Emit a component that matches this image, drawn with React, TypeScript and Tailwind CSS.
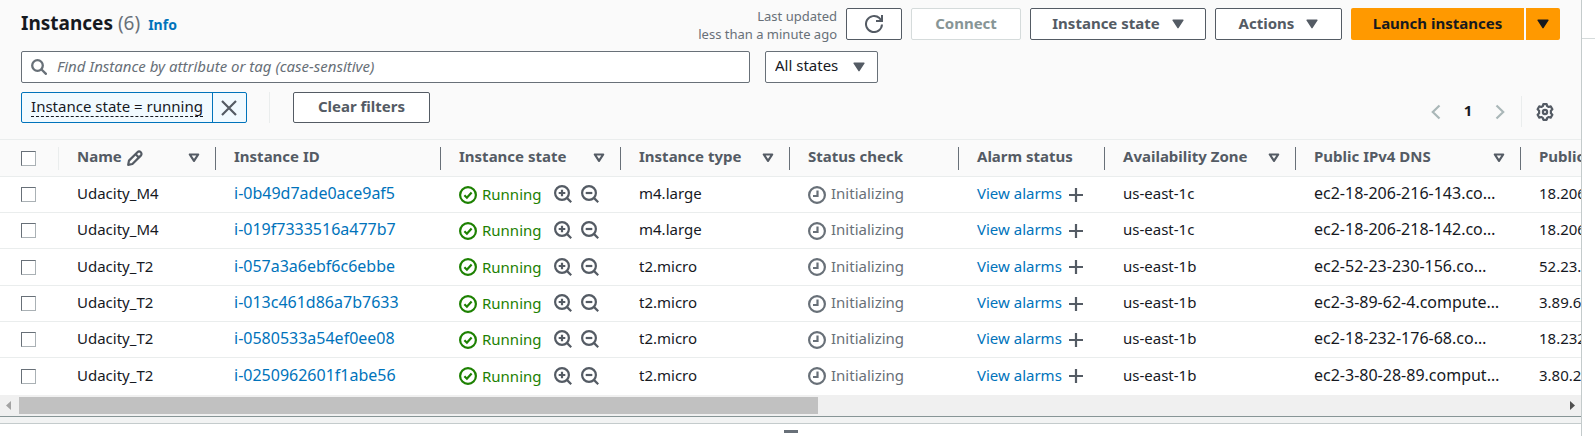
import React from "react";

const F = "font-['Noto_Sans','Open_Sans',sans-serif]";

type IconProps = { className?: string };

const Refresh = () => (
  <svg viewBox="0 0 18 18" className="size-[18px]" fill="none" stroke="currentColor" strokeWidth="2">
    <path d="M17 9.500a8 8 0 1 1-2.600-6.400L17 6" />
    <path d="M11 6h6V0" />
  </svg>
);

const SearchIcon = () => (
  <svg viewBox="0 0 16 16" className="size-4 shrink-0" fill="none" stroke="currentColor" strokeWidth="2.300">
    <circle cx="6.500" cy="6.500" r="5.300" />
    <path d="M10.300 10.300 15.600 15.600" />
  </svg>
);

const CaretDown = ({ className = "" }: IconProps) => (
  <svg viewBox="0 0 12 10" className={`h-[10px] w-3 shrink-0 ${className}`} fill="currentColor">
    <path d="M1 .5h10a.6.6 0 0 1 .5.9L6.600 9a.7.7 0 0 1-1.200 0L.5 1.400A.6.6 0 0 1 1 .5Z" />
  </svg>
);

const SortCaret = () => (
  <svg viewBox="0 0 12 10" className="h-[10px] w-3 shrink-0" fill="none" stroke="currentColor" strokeWidth="2.200" strokeLinejoin="round">
    <path d="M1.800 1.500h8.400L6 7.900Z" />
  </svg>
);

const Pencil = () => (
  <svg viewBox="0 0 16 16" className="size-4 shrink-0" fill="none" stroke="currentColor" strokeWidth="2.200" strokeLinejoin="round">
    <path d="M1.200 14.800 2 10.600 10.400 2.200a2.200 2.200 0 0 1 3.400 3.400L5.400 14Z" />
    <path d="M8.600 4.200 11.800 7.400" />
  </svg>
);

const CheckCircle = () => (
  <svg viewBox="0 0 18 18" className="size-[18px] shrink-0" fill="none" stroke="currentColor" strokeWidth="2.200">
    <circle cx="9" cy="9" r="7.900" />
    <path d="m5.400 9.300 2.500 2.400 4.700-5.200" />
  </svg>
);

const ClockIcon = () => (
  <svg viewBox="0 0 18 18" className="size-[18px] shrink-0" fill="none" stroke="currentColor" strokeWidth="2.200">
    <circle cx="9" cy="9" r="7.900" />
    <path d="M9.500 4.500v5.500H5" />
  </svg>
);

const Magnify = ({ plus }: { plus?: boolean }) => (
  <svg viewBox="0 0 18 18" className="size-[18px]" fill="none" stroke="currentColor" strokeWidth="2.200">
    <circle cx="8" cy="8" r="6.900" />
    <path d="M12.900 12.900 17.200 17.200" />
    <path d={plus ? "M4.700 8h6.600M8 4.700v6.600" : "M4.700 8h6.600"} />
  </svg>
);

const Plus = () => (
  <svg viewBox="0 0 14 14" className="size-[14px]" fill="none" stroke="currentColor" strokeWidth="2.200">
    <path d="M7 0v14M0 7h14" />
  </svg>
);

const Close = () => (
  <svg viewBox="0 0 16 16" className="size-4" fill="none" stroke="currentColor" strokeWidth="2.200">
    <path d="m1 1 14 14M15 1 1 15" />
  </svg>
);

const Chevron = ({ right }: { right?: boolean }) => (
  <svg viewBox="0 0 10 16" className="h-4 w-[10px]" fill="none" stroke="currentColor" strokeWidth="2.200">
    <path d={right ? "m1.500 1.500 6.700 6.500-6.700 6.500" : "m8.500 1.500-6.700 6.500 6.700 6.500"} />
  </svg>
);

const Gear = () => (
  <svg viewBox="0 0 18 18" className="size-[18px]" fill="none" stroke="currentColor" strokeWidth="2.200" strokeLinejoin="round">
    <path d="M7.300 1.200h3.400l.5 1.900 1.500.9 2-.6 1.700 2.800-1.500 1.500v2.600l1.500 1.500-1.700 2.800-2-.6-1.500.9-.5 1.900H7.300l-.5-1.900-1.500-.9-2 .6-1.700-2.800L3.100 10.300V7.700L1.600 6.200l1.700-2.800 2 .6 1.500-.9Z" />
    <circle cx="9" cy="9" r="2.100" />
  </svg>
);

const button =
  "flex items-center justify-center rounded-[2px] border border-[#545b64] bg-white text-[15px] leading-5 font-bold text-[#545b64]";

const columns = [
  { label: "Name", edit: true, sort: true },
  { label: "Instance ID" },
  { label: "Instance state", sort: true },
  { label: "Instance type", sort: true },
  { label: "Status check" },
  { label: "Alarm status" },
  { label: "Availability Zone", sort: true },
  { label: "Public IPv4 DNS", sort: true },
  { label: "Public IPv4 address", sort: true },
];

const rows = [
  ["Udacity_M4", "i-0b49d7ade0ace9af5", "m4.large", "us-east-1c", "ec2-18-206-216-143.co…", "18.206.216.143"],
  ["Udacity_M4", "i-019f7333516a477b7", "m4.large", "us-east-1c", "ec2-18-206-218-142.co…", "18.206.218.142"],
  ["Udacity_T2", "i-057a3a6ebf6c6ebbe", "t2.micro", "us-east-1b", "ec2-52-23-230-156.co…", "52.23.230.156"],
  ["Udacity_T2", "i-013c461d86a7b7633", "t2.micro", "us-east-1b", "ec2-3-89-62-4.compute…", "3.89.62.4"],
  ["Udacity_T2", "i-0580533a54ef0ee08", "t2.micro", "us-east-1b", "ec2-18-232-176-68.co…", "18.232.176.68"],
  ["Udacity_T2", "i-0250962601f1abe56", "t2.micro", "us-east-1b", "ec2-3-80-28-89.comput…", "3.80.28.89"],
];

const Checkbox = ({ label }: { label: string }) => (
  <input
    type="checkbox"
    aria-label={label}
    className="block size-[15px] appearance-none border border-[#687078] border-r-[#aab1b5] border-b-[#aab1b5] bg-white"
  />
);

export default function App() {
  return (
    <div className={`${F} flex min-h-screen bg-white text-[15px] leading-5 text-[#16191f]`}>
      <main className="flex min-w-0 flex-1 flex-col">
        <section className="bg-[#fafafa]">
          <header className="flex h-[51px] items-start px-[21px] pt-2">
            <div className="flex flex-1 items-baseline">
              <h1 className="text-[19px] leading-[30px] font-bold">
                Instances <span className="font-normal text-[#687078]">(6)</span>
              </h1>
              <a href="#info" className="ml-2 text-[14px] font-bold text-[#0073bb]">Info</a>
            </div>
            <div className="flex items-start gap-[9px]">
              <p className="-mt-px text-right text-[13px] leading-[18px] text-[#687078]">
                Last updated
                <br />
                less than a minute ago
              </p>
              <button className={`${button} h-8 w-14`} aria-label="Refresh"><Refresh /></button>
              <button disabled className="flex h-8 w-[110px] items-center justify-center rounded-[2px] border border-[#d5dbdb] bg-white pb-[2px] text-[15px] leading-5 font-bold text-[#879596]">Connect</button>
              <button className={`${button} h-8 w-44 gap-3`}><span className="pb-[2px]">Instance state</span><CaretDown /></button>
              <button className={`${button} h-8 w-[127px] gap-3`}><span className="pb-[2px]">Actions</span><CaretDown /></button>
              <div className="flex gap-[2px]">
                <button className="h-8 w-[173px] rounded-l-[2px] bg-[#ff9900] pb-[2px] text-[15px] leading-5 font-bold text-[#16191f]">Launch instances</button>
                <button aria-label="More launch options" className="flex h-8 w-[34px] items-center justify-center rounded-r-[2px] bg-[#ff9900]"><CaretDown /></button>
              </div>
            </div>
          </header>

          <div className="flex gap-[15px] px-[21px]">
            <label className="flex h-8 w-[729px] items-center gap-[10px] rounded-[2px] border border-[#687078] bg-white px-[9px] text-[#687078]">
              <SearchIcon />
              <input
                type="search"
                aria-label="Find instances"
                placeholder="Find Instance by attribute or tag (case-sensitive)"
                className="min-w-0 flex-1 bg-transparent pb-[2px] outline-none placeholder:text-[#687078] placeholder:italic"
              />
            </label>
            <div className="relative flex items-center">
              <select aria-label="State filter" className="h-8 w-[113px] appearance-none rounded-[2px] border border-[#687078] bg-white pb-[4px] pl-[9px]">
                <option>All states</option>
              </select>
              <CaretDown className="pointer-events-none absolute right-[13px] text-[#545b64]" />
            </div>
          </div>

          <div className="flex items-start px-[21px] pt-[9px] pb-3">
            <div className="flex h-[31px] rounded-[2px] border border-[#0073bb] bg-[#f1faff]">
              <button className="flex w-[191px] items-center justify-center border-r border-[#0073bb] pb-[2px]">
                <span className="border-b border-dashed border-[#16191f]">Instance state = running</span>
              </button>
              <button aria-label="Remove filter" className="flex w-[33px] items-center justify-center pr-px text-[#545b64]"><Close /></button>
            </div>
            <span className="mx-[22px] h-[31px] border-l border-[#eaeded]" />
            <button className={`${button} ml-px h-[31px] w-[137px] pb-[3px]`}>Clear filters</button>
            <nav aria-label="Pages" className="ml-auto flex h-[35px] items-end">
              <span className="flex h-[31px] items-center">
                <button disabled aria-label="Previous page" className="text-[#aab7b8]"><Chevron /></button>
                <button className="w-[54px] pb-[3px] font-bold">1</button>
                <button disabled aria-label="Next page" className="text-[#aab7b8]"><Chevron right /></button>
              </span>
              <span className="mr-[14px] ml-4 h-[31px] border-l border-[#eaeded]" />
              <button aria-label="Preferences" className="mr-[6px] h-[31px] text-[#545b64]"><Gear /></button>
            </nav>
          </div>
        </section>

        <div className="overflow-hidden bg-white">
          <table className="w-[1761px] table-fixed border-collapse text-left">
            <colgroup>
              <col className="w-[59px]" />
              <col className="w-[157px]" />
              <col className="w-[225px]" />
              <col className="w-[180px]" />
              <col className="w-[169px]" />
              <col className="w-[169px]" />
              <col className="w-[146px]" />
              <col className="w-[191px]" />
              <col className="w-[225px]" />
              <col className="w-[240px]" />
            </colgroup>
            <thead className="border-y border-[#eaeded] bg-[#fafafa] text-[#545b64]">
              <tr className="h-[37px]">
                <th className="p-0">
                  <div className="flex h-[23px] items-center border-r border-[#eaeded] pl-[21px]"><Checkbox label="Select all instances" /></div>
                </th>
                {columns.map((c) => (
                  <th key={c.label} className="p-0 font-bold">
                    <div className="flex h-[23px] items-center border-r border-[#687078] pr-[15px] pl-[18px] whitespace-nowrap">
                      <span className="flex flex-1 items-center gap-[5px]"><span className="pb-[4px]">{c.label}</span>{c.edit && <Pencil />}</span>
                      {c.sort && <SortCaret />}
                    </div>
                  </th>
                ))}
              </tr>
            </thead>
            <tbody>
              {rows.map(([name, id, type, zone, dns, ip]) => (
                <tr key={id} className="h-[36px] border-b border-[#eaeded] whitespace-nowrap last:border-b-0 nth-[3]:h-[37px] nth-[6]:h-[37px]">
                  <td className="p-0 pl-[21px]"><Checkbox label={`Select ${id}`} /></td>
                  <td className="p-0 pb-[3px] pl-[18px]">{name}</td>
                  <td className="p-0 pb-[3px] pl-[18px] text-[16px]"><a href={`#${id}`} className="text-[#0073bb]">{id}</a></td>
                  <td className="p-0 pl-[18px]">
                    <div className="flex items-center text-[#545b64]">
                      <span className="flex w-[95px] items-center gap-[5px] text-[#1d8102]"><CheckCircle /><span className="pb-px">Running</span></span>
                      <button aria-label="Include state in filter" className="pb-px"><Magnify plus /></button>
                      <button aria-label="Exclude state from filter" className="ml-[9px] pb-px"><Magnify /></button>
                    </div>
                  </td>
                  <td className="p-0 pb-[3px] pl-[18px]">{type}</td>
                  <td className="p-0 pl-[18px]"><span className="flex items-center gap-[5px] text-[#687078]"><ClockIcon /><span className="pb-[3px]">Initializing</span></span></td>
                  <td className="p-0 pl-[18px]">
                    <div className="flex items-center gap-[7px] text-[#545b64]">
                      <a href="#alarms" className="pb-[3px] text-[#0073bb]">View alarms</a>
                      <button aria-label="Create alarm"><Plus /></button>
                    </div>
                  </td>
                  <td className="p-0 pb-[3px] pl-[18px]">{zone}</td>
                  <td className="p-0 pb-[3px] pl-[18px] text-[16px]">{dns}</td>
                  <td className="p-0 pb-[3px] pl-[18px]">{ip}</td>
                </tr>
              ))}
            </tbody>
          </table>
        </div>

        <div className="flex h-[21px] items-center bg-[#f0f0f0] px-[6px]">
          <svg viewBox="0 0 5 9" className="h-[9px] w-[5px]" fill="#a3a3a3"><path d="M5 0v9L0 4.500Z" /></svg>
          <div className="mx-2 h-[17px] flex-1"><div className="h-full w-[51.8%] bg-[#c1c1c1]" /></div>
          <svg viewBox="0 0 5 9" className="h-[9px] w-[5px]" fill="#505050"><path d="M0 0v9l5-4.500Z" /></svg>
        </div>
        <div className="h-2 border-t border-b border-t-[#879596] border-b-[#c4cbcc] bg-[#f2f3f3]" />
        <div className="flex flex-1 justify-center bg-white pt-[6px]">
          <span className="h-[3px] w-[14px] bg-[#687078]" />
        </div>
      </main>
      <aside className="w-[14px] shrink-0 border-l border-[#c4cbcc]">
        <div className="h-[39px] border-b border-[#d5dbdb]" />
      </aside>
    </div>
  );
}
